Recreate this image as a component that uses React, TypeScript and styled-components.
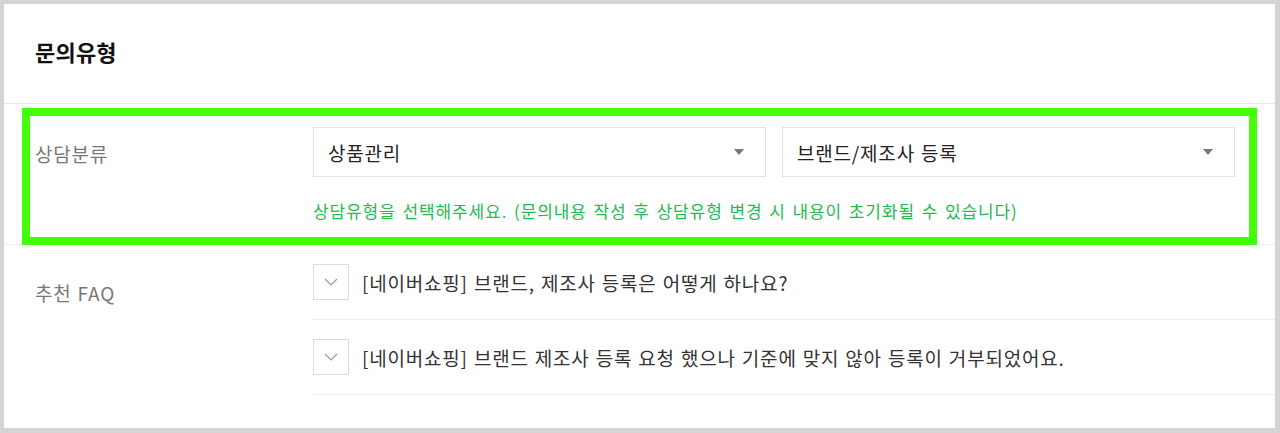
import styled, { createGlobalStyle } from "styled-components";

const GlobalStyle = createGlobalStyle`
  html, body {
    margin: 0;
    padding: 0;
    background: #ffffff;
  }
  body {
    font-family: "Noto Sans CJK KR", "Noto Sans", sans-serif;
  }
  * {
    box-sizing: border-box;
  }
`;

type SelectProps = {
  value: string;
};

const Select = ({ value }: SelectProps) => (
  <SelectBox>
    <SelectValue>{value}</SelectValue>
    <Caret />
  </SelectBox>
);

const faqs: string[] = [
  "[네이버쇼핑] 브랜드, 제조사 등록은 어떻게 하나요?",
  "[네이버쇼핑] 브랜드 제조사 등록 요청 했으나 기준에 맞지 않아 등록이 거부되었어요.",
];

const App = () => {
  return (
    <>
      <GlobalStyle />
      <Panel>
        <Header>
          <Title>문의유형</Title>
        </Header>

        <CategoryRow>
          <Highlight>
            <Label>상담분류</Label>
            <Field>
              <Selects>
                <Select value="상품관리" />
                <Select value="브랜드/제조사 등록" />
              </Selects>
              <Helper>
                상담유형을 선택해주세요. (문의내용 작성 후 상담유형 변경 시 내용이 초기화될 수 있습니다)
              </Helper>
            </Field>
          </Highlight>
        </CategoryRow>

        <FaqRow>
          <Label $top={37}>추천 FAQ</Label>
          <FaqList>
            {faqs.map((q) => (
              <FaqItem key={q}>
                <Toggle>
                  <svg width="14" height="8" viewBox="0 0 14 8">
                    <path d="M1 1 L7 7 L13 1" fill="none" stroke="#9a9a9a" strokeWidth="1.2" />
                  </svg>
                </Toggle>
                <FaqText>{q}</FaqText>
              </FaqItem>
            ))}
          </FaqList>
        </FaqRow>
      </Panel>
    </>
  );
};

const Panel = styled.div`
  width: 1280px;
  height: 433px;
  border: 4px solid #d4d4d4;
  border-right-width: 5px;
  border-bottom-width: 5px;
  background: #ffffff;
  overflow: hidden;
`;

const Header = styled.div`
  height: 100px;
  display: flex;
  align-items: center;
  padding-left: 31px;
  padding-bottom: 6px;
  border-bottom: 1px solid #e8eaee;
`;

const Title = styled.h2`
  margin: 0;
  font-size: 22px;
  font-weight: 700;
  color: #111111;
  letter-spacing: 0.2px;
`;

const CategoryRow = styled.div`
  padding: 4px 18px 0 18px;
  border-bottom: 1px solid #eceef2;
`;

const Highlight = styled.div`
  display: grid;
  grid-template-columns: 278px 1fr;
  border: 8px solid #44ff0a;
  padding: 11px 14px 16px 5px;
  margin-bottom: -1px;
`;

const Label = styled.div<{ $top?: number }>`
  padding-top: ${(p) => p.$top ?? 16}px;
  font-size: 19px;
  line-height: 22px;
  color: #777777;
  letter-spacing: 0.8px;
  word-spacing: 1px;
`;

const Field = styled.div`
  display: flex;
  flex-direction: column;
`;

const Selects = styled.div`
  display: grid;
  grid-template-columns: 1fr 1fr;
  gap: 16px;
`;

const SelectBox = styled.div`
  height: 50px;
  border: 1px solid #e3e3e3;
  display: flex;
  align-items: center;
  justify-content: space-between;
  padding: 0 21px 0 14px;
  background: #ffffff;
`;

const SelectValue = styled.span`
  font-size: 19px;
  color: #222222;
  letter-spacing: 0.8px;
  word-spacing: 1px;
`;

const Caret = styled.span`
  width: 0;
  height: 0;
  border-left: 5px solid transparent;
  border-right: 5px solid transparent;
  border-top: 6px solid #777777;
`;

const Helper = styled.p`
  margin: 24px 0 0;
  font-size: 17px;
  line-height: 20px;
  color: #22bb50;
  letter-spacing: 0.9px;
  word-spacing: 2px;
`;

const FaqRow = styled.div`
  display: grid;
  grid-template-columns: 278px 1fr;
  padding-left: 31px;
`;

const FaqList = styled.div`
  display: flex;
  flex-direction: column;
`;

const FaqItem = styled.div`
  display: flex;
  align-items: center;
  gap: 13px;
  padding: 19px 0 19px;
  border-bottom: 1px solid #eceef2;
`;

const Toggle = styled.span`
  width: 36px;
  height: 36px;
  flex: none;
  border: 1px solid #dcdcdc;
  display: flex;
  align-items: center;
  justify-content: center;
`;

const FaqText = styled.span`
  font-size: 19px;
  color: #333333;
  letter-spacing: 0.8px;
  word-spacing: 1px;
`;

export default App;
